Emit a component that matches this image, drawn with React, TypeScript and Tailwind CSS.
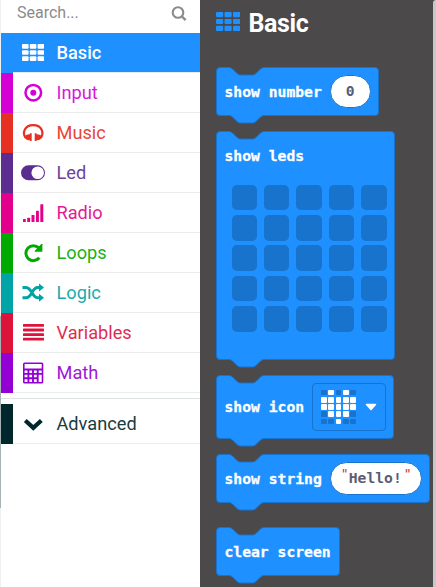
import React from "react";

type IconProps = { children: React.ReactNode };
const Icon = ({ children }: IconProps) => (
  <svg className="h-6 w-6 shrink-0" viewBox="0 0 24 24" fill="currentColor">
    {children}
  </svg>
);

const cells = [0, 1, 2];
const five = [0, 1, 2, 3, 4];

const GridShape = ({ className }: { className: string }) => (
  <svg className={className} viewBox="0 0 24 19" preserveAspectRatio="none" fill="currentColor">
    {cells.map((r) => cells.map((c) => (
      <rect key={`${r}${c}`} x={c * 8.5} y={r * 6.9} width={7.2} height={5.2} rx={1.1} />
    )))}
  </svg>
);

const Target = () => (
  <Icon>
    <circle cx="12.3" cy="11.7" r="7.8" fill="none" stroke="currentColor" strokeWidth="2.5" />
    <circle cx="12.3" cy="11.7" r="3" />
  </Icon>
);
const Headphones = () => (
  <Icon>
    <path d="M4.600 17C1.200 12 3.200 4.200 12.200 4.200S23.200 12 19.800 17" fill="none" stroke="currentColor" strokeWidth="2.200" />
    <path d="M8.800 12.200h1.900v7.800H8.800v-.9C6 19.500 4 18.100 3.700 15.900c0-1.700 2.400-2.700 5.100-2.700zM15.600 12.200h-1.900v7.800h1.900v-.9c2.800.4 4.800-1 5.100-3.200 0-1.700-2.400-2.700-5.100-2.700z" />
  </Icon>
);
const Toggle = () => (
  <Icon>
    <path fillRule="evenodd" d="M7.500 4.300h9a7.500 7.500 0 0 1 0 15h-9a7.500 7.500 0 0 1 0-15zM16.700 5.500a6.300 6.300 0 1 0 0 12.600a6.300 6.300 0 1 0 0-12.600z" />
  </Icon>
);
const Signal = () => (
  <Icon>
    <rect x="2" y="18" width="2.800" height="3" rx=".5" />
    <rect x="6.200" y="16.700" width="2.900" height="4.300" rx=".5" />
    <rect x="10.500" y="14" width="3" height="7" rx=".5" />
    <rect x="15" y="9.700" width="2.900" height="11.300" rx=".5" />
    <rect x="19.300" y="3.200" width="3" height="17.800" rx=".5" />
  </Icon>
);
const Repeat = () => (
  <Icon>
    <path d="M17.800 6.900A7.500 7.500 0 1 0 18.300 16.800" fill="none" stroke="currentColor" strokeWidth="3" />
    <path d="M21.400 3.300v6.800q0 .7-.7.700h-6.500q-.9-.3-.4-1.100l6.500-6.800q.8-.5 1.100.4z" />
  </Icon>
);
const Shuffle = () => (
  <Icon>
    <path d="M1.500 6.500H5C11 6.500 11 16.700 16.500 16.700H19M1.500 16.700H5C11 16.700 11 6.500 16.500 6.500H19" fill="none" stroke="currentColor" strokeWidth="3" />
    <path d="M18 2.500l5 4l-5 4zM18 12.700l5 4l-5 4z" />
  </Icon>
);
const Lines = () => (
  <Icon>
    {[3, 7.600, 12.200, 16.800].map((y) => <rect key={y} x="2" y={y} width="21" height="2.800" rx=".6" />)}
  </Icon>
);
const Calculator = () => (
  <Icon>
    <rect x="2.800" y="2.300" width="18.700" height="19.400" rx=".8" fill="none" stroke="currentColor" strokeWidth="1.600" />
    <path fill="none" stroke="currentColor" strokeWidth="1.900" d="M2.700 8.500h18.600M2.700 12.900h18.600M2.700 17.300h14M7.400 8.300v13.500M12 8.300v13.500M16.700 8.300v13.500" />
  </Icon>
);
const Chevron = () => (
  <Icon>
    <path d="M4.300 8.500l8 7.300l8-7.300" fill="none" stroke="currentColor" strokeWidth="4.200" />
  </Icon>
);

type Category = { name: string; text: string; strip: string; icon: React.ReactNode };
const categories: Category[] = [
  { name: "Input", text: "text-[#d400d4]", strip: "bg-[#d400d4]", icon: <Target /> },
  { name: "Music", text: "text-[#e63022]", strip: "bg-[#e63022]", icon: <Headphones /> },
  { name: "Led", text: "text-[#5c2d91]", strip: "bg-[#5c2d91]", icon: <Toggle /> },
  { name: "Radio", text: "text-[#e3008c]", strip: "bg-[#e3008c]", icon: <Signal /> },
  { name: "Loops", text: "text-[#00aa00]", strip: "bg-[#00aa00]", icon: <Repeat /> },
  { name: "Logic", text: "text-[#00a4a6]", strip: "bg-[#00a4a6]", icon: <Shuffle /> },
  { name: "Variables", text: "text-[#dc143c]", strip: "bg-[#dc143c]", icon: <Lines /> },
  { name: "Math", text: "text-[#9400d3]", strip: "bg-[#9400d3]", icon: <Calculator /> },
];

const Row = ({ name, text, strip, icon }: Category) => (
  <div className={`flex h-10 ${text}`}>
    <div className={`w-3 ${strip}`} />
    <div className="flex flex-1 items-center gap-[11.500px] border-b border-[#ebeded] pl-2">
      {icon}
      <span className="text-[18.200px] leading-6 opacity-90">{name}</span>
    </div>
  </div>
);

type BlockProps = { w: number; h: number; className?: string; children: React.ReactNode };
const Block = ({ w, h, className = "", children }: BlockProps) => (
  <div className={`relative shrink-0 ${className}`} style={{ width: w, height: h }}>
    <svg className="absolute inset-0 overflow-visible" width={w} height={h}>
      <path
        d={`M.5 4Q.5.500 4 .5H13Q15 .5 16.500 2L21 6.500Q22.500 8 24.500 8H36.500Q38.500 8 40 6.500L44.500 2Q46 .5 48 .5H${w - 4}Q${w - 0.5} .5 ${w - 0.5} 4V${h - 4}Q${w - 0.5} ${h - 0.5} ${w - 4} ${h - 0.5}H48Q46 ${h - 0.5} 44.500 ${h + 1}L40 ${h + 5.5}Q38.500 ${h + 7} 36.500 ${h + 7}H24.500Q22.500 ${h + 7} 21 ${h + 5.5}L16.500 ${h + 1}Q15 ${h - 0.5} 13 ${h - 0.5}H4Q.5 ${h - 0.5} .5 ${h - 4}Z`}
        fill="#1e90ff"
        stroke="#1873cc"
      />
    </svg>
    <div className="relative flex h-full items-center pl-[8.500px]">{children}</div>
  </div>
);

const Label = ({ children }: { children: React.ReactNode }) => (
  <span className="whitespace-pre text-[14.700px] font-bold leading-5 text-white [-webkit-text-stroke:0.3px_white]">{children}</span>
);

const Quote = () => (
  <span className="mb-[9px] w-[7px] text-center text-[13px] font-normal leading-4 text-[#bb3a3a]">&quot;</span>
);

const heart = ["01010", "11111", "11111", "01110", "00100"];

export default function App() {
  return (
    <div className="flex h-[587px] w-[436px] overflow-hidden bg-white font-['Roboto',sans-serif]">
      <div className="flex w-px flex-col bg-[#edf1f1] pt-[316px]">
        <div className="h-[192px] bg-[#a5b3b4]" />
      </div>
      <aside className="flex w-[199px] flex-col">
        <div className="flex h-[33px] items-center justify-between pb-[7px] pl-4 pr-[13px] text-[#8b8b8b]">
          <span className="text-[16px] leading-6">Search...</span>
          <svg className="mt-[2px] h-4 w-4" viewBox="0 0 16 16" fill="none" stroke="currentColor" strokeWidth="2.100">
            <circle cx="7" cy="6.500" r="5.300" />
            <path d="M11 10.500l3.600 3.600" strokeWidth="2.400" />
          </svg>
        </div>
        <div className="flex h-10 flex-col bg-[#1e90ff] text-white">
          <div className="flex h-[39px] items-center pl-[21px]">
            <GridShape className="-mt-px h-[17px] w-[22px]" />
            <span className="ml-[12.500px] text-[18.200px] font-medium leading-6">Basic</span>
          </div>
          <div className="ml-3 h-px bg-[#e5ecef]" />
        </div>
        {categories.map((c) => <Row key={c.name} {...c} />)}
        <div className="mb-[5px] mt-[5px] h-px bg-[#dfe2e2]" />
        <Row name="Advanced" text="text-[#00272b]" strip="bg-[#00272b]" icon={<Chevron />} />
      </aside>
      <main className="flex w-[233px] flex-col bg-[#4b4949] pl-4 font-['DejaVu_Sans_Mono',monospace]">
        <div className="flex h-[67px] shrink-0 items-start gap-[8.500px] pt-[9px] font-['Roboto',sans-serif] text-[#1e90ff]">
          <GridShape className="mt-[3px] h-[19px] w-[24px]" />
          <h1 className="text-[25px] font-bold leading-[30px] tracking-[-0.4px] text-white">Basic</h1>
        </div>
        <Block w={163} h={49}>
          <Label>show number</Label>
          <div className="ml-[8px] flex h-[33px] w-[41px] shrink-0 items-center justify-center rounded-full border border-[#1873cc] bg-white text-[14.700px] font-bold text-[#575e75]">0</div>
        </Block>
        <Block w={179} h={229} className="mt-[15px]">
          <div className="flex h-full flex-col pt-[15px]">
            <Label>show leds</Label>
            <div className="ml-[7px] mt-[18.700px] grid grid-cols-5 gap-x-[6.900px] gap-y-[4.900px]">
              {five.map((r) => five.map((c) => (
                <div key={`${r}${c}`} className="h-[25.500px] w-[25.500px] rounded-[5px] bg-[#1873cc]" />
              )))}
            </div>
          </div>
        </Block>
        <Block w={178} h={64} className="mt-[15px]">
          <Label>show icon</Label>
          <div className="ml-[8px] flex h-12 w-[74px] shrink-0 items-center rounded-[4px] border border-[#1873cc] pl-[8px]">
            <div className="grid grid-cols-5 gap-[1.500px]">
              {heart.map((row, r) => row.split("").map((v, c) => (
                <div key={`${r}${c}`} className={`h-[5.800px] w-[5.800px] rounded-[1px] ${v === "1" ? "bg-white" : "bg-[#1873cc]"}`} />
              )))}
            </div>
            <svg className="ml-[9px] h-[8px] w-[12px]" viewBox="0 0 12 8"><path d="M1.500 1.500h9L6 6.500z" fill="white" stroke="white" strokeWidth="1.500" strokeLinejoin="round" /></svg>
          </div>
        </Block>
        <Block w={214} h={49} className="mt-[15px]">
          <Label>show string</Label>
          <div className="ml-[8px] flex h-[33px] w-[92px] shrink-0 items-center justify-center rounded-full border border-[#1873cc] bg-white text-[14.700px] font-bold text-[#575e75]">
            <Quote />
            <span className="ml-px mr-[2px]">Hello!</span>
            <Quote />
          </div>
        </Block>
        <Block w={124} h={49} className="mt-[24px]">
          <Label>clear screen</Label>
        </Block>
      </main>
      <div className="flex-1 bg-[#4b4949]">
        <div className="h-full rounded-tl-[3px] bg-[#c8c8c8]" />
      </div>
    </div>
  );
}
